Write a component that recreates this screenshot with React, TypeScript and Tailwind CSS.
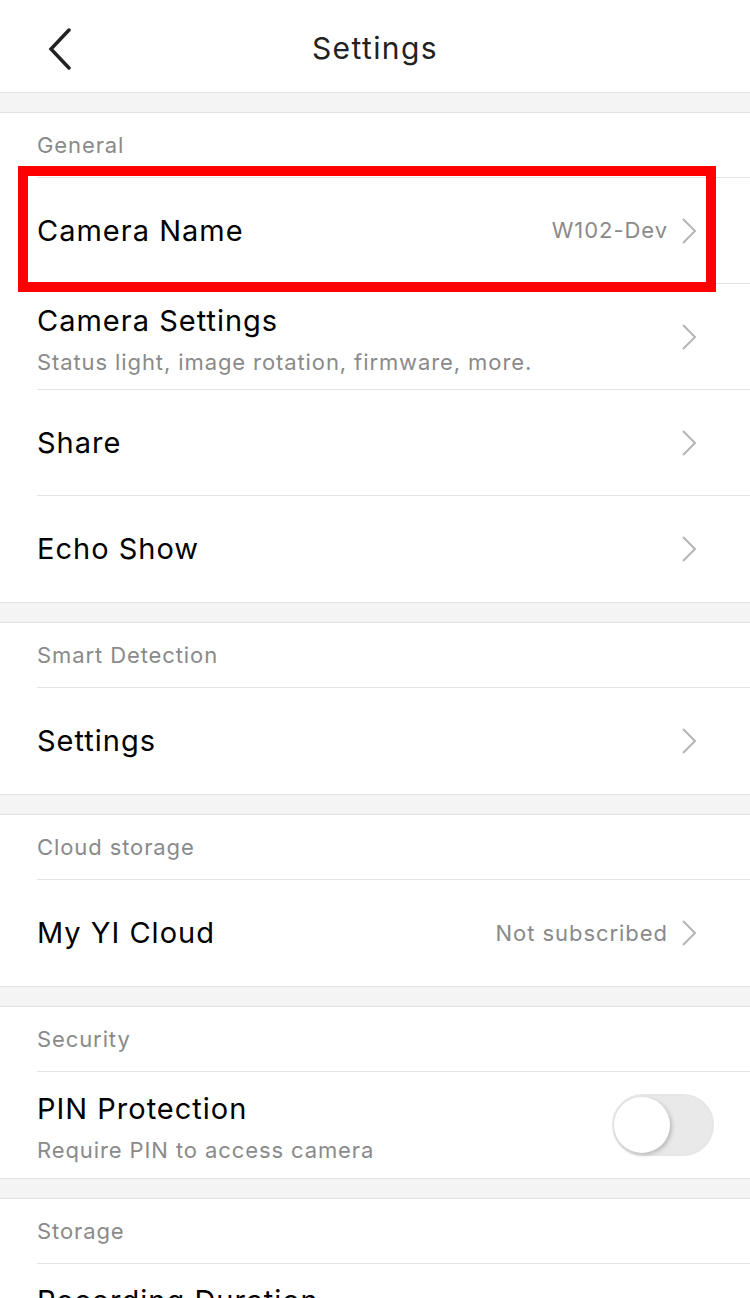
const font = { fontFamily: 'Inter, Roboto, "Noto Sans", sans-serif' }

function Chevron() {
  return (
    <svg width="18" height="28" viewBox="0 0 18 28" className="shrink-0">
      <path d="M3 2 L15 14 L3 26" fill="none" stroke="#b5b5b5" strokeWidth="2" />
    </svg>
  )
}

function Band() {
  return <div className="h-[21px] border-y border-[#e2e2e2] bg-[#f4f4f4]" />
}

function Header({ label }: { label: string }) {
  return (
    <div className="ml-[37px] flex h-[65px] items-center border-b border-[#e4e4e4] text-[22px] tracking-[0.9px] text-[#8a8a8a]">
      {label}
    </div>
  )
}

function Row({
  title,
  sub,
  value,
  last,
  children,
}: {
  title: string
  sub?: string
  value?: string
  last?: boolean
  children?: React.ReactNode
}) {
  return (
    <div className={`ml-[37px] flex h-[106px] items-center pr-[52px] ${last ? '' : 'border-b border-[#e4e4e4]'}`}>
      <div className={`flex flex-1 flex-col ${sub ? 'pt-[5px]' : ''}`}>
        <div className="text-[29px] leading-[36px] tracking-[1px] text-black">{title}</div>
        {sub && <div className="mt-[9px] text-[22px] leading-[28px] tracking-[0.9px] text-[#8a8a8a]">{sub}</div>}
      </div>
      {children ?? (
        <div className="flex items-center gap-[12px]">
          {value && <span className="text-[22px] tracking-[0.95px] text-[#8a8a8a]">{value}</span>}
          <Chevron />
        </div>
      )}
    </div>
  )
}

function Toggle() {
  return (
    <div className="-mr-[16px] flex h-[62px] w-[102px] items-center rounded-full border-2 border-[#e6e6e6] bg-[#e9e9e9]">
      <div className="h-[56px] w-[56px] rounded-full bg-white shadow-[2px_2px_4px_rgba(0,0,0,0.2)]" />
    </div>
  )
}

export default function App() {
  return (
    <div className="h-[1298px] w-[750px] overflow-hidden bg-white" style={font}>
      {/* Nav bar */}
      <div className="relative flex h-[92px] items-center justify-center pt-[4px]">
        <svg width="30" height="42" viewBox="0 0 30 42" className="absolute left-[45px] top-[28px]">
          <path d="M24 2 L6 21 L24 40" fill="none" stroke="#222" strokeWidth="3.5" strokeLinecap="round" />
        </svg>
        <span className="text-[30px] tracking-[1.4px] text-[#222]">Settings</span>
      </div>
      <Band />

      <Header label="General" />
      <div className="relative">
        <Row title="Camera Name" value="W102-Dev" />
        <div className="pointer-events-none absolute left-[18px] top-[-12px] h-[126px] w-[698px] border-[10px] border-[#ff0000]" />
      </div>
      <Row title="Camera Settings" sub="Status light, image rotation, firmware, more." />
      <Row title="Share" />
      <Row title="Echo Show" last />
      <Band />

      <Header label="Smart Detection" />
      <Row title="Settings" last />
      <Band />

      <Header label="Cloud storage" />
      <Row title="My YI Cloud" value="Not subscribed" last />
      <Band />

      <Header label="Security" />
      <Row title="PIN Protection" sub="Require PIN to access camera" last>
        <Toggle />
      </Row>
      <Band />

      <Header label="Storage" />
      <Row title="Recording Duration" sub="Set the length of each recording" last />
    </div>
  )
}
